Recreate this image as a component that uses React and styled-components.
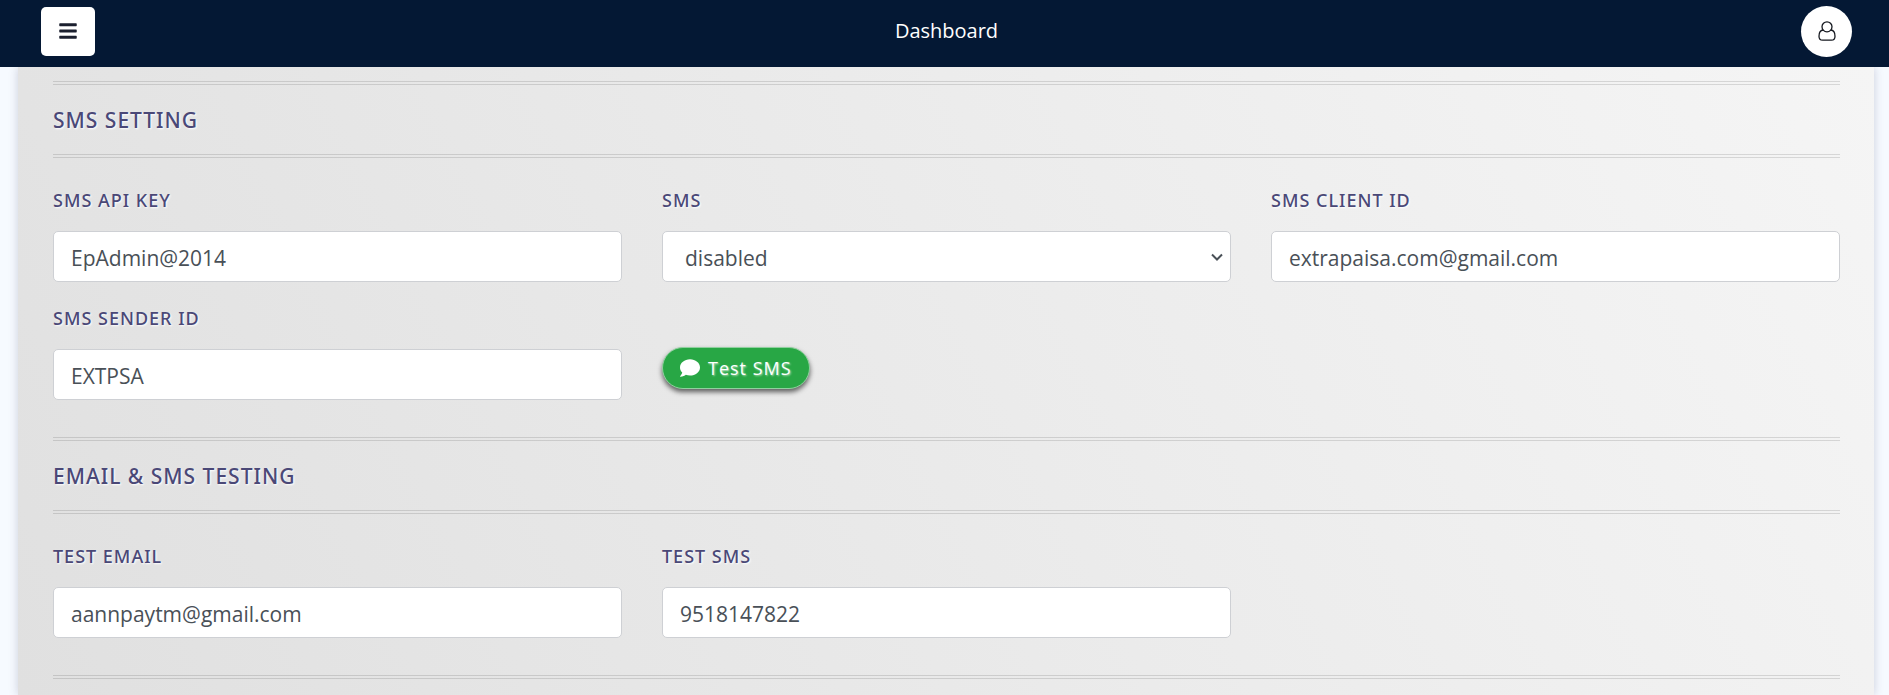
import styled, { createGlobalStyle } from "styled-components";
import { FaBars, FaComment } from "react-icons/fa";

const App = () => {
    return (
        <>
            <GlobalStyle />
            <Page>
                <Header>
                    <MenuButton type="button" aria-label="Menu">
                        <FaBars size={20} />
                    </MenuButton>
                    <Title>Dashboard</Title>
                    <UserButton type="button" aria-label="Account">
                        <UserIcon />
                    </UserButton>
                </Header>
                <Panel>
                    <Section title="SMS Setting">
                        <Field id="sms-key" label="SMS Api Key" value="EpAdmin@2014" />
                        <FormGroup>
                            <Label htmlFor="sms-status">SMS</Label>
                            <SelectWrap>
                                <Select id="sms-status" defaultValue="disabled">
                                    <option value="enabled">enabled</option>
                                    <option value="disabled">disabled</option>
                                </Select>
                                <Chevron viewBox="0 0 12 8">
                                    <path d="M1 1.5l5 5 5-5" />
                                </Chevron>
                            </SelectWrap>
                        </FormGroup>
                        <Field
                            id="sms-client"
                            label="SMS Client ID"
                            value="extrapaisa.com@gmail.com"
                        />
                        <Field id="sms-sender" label="SMS Sender ID" value="EXTPSA" />
                        <TestButton type="button">
                            <FaComment size={20} />
                            Test SMS
                        </TestButton>
                    </Section>
                    <Section title="Email & SMS Testing">
                        <Field
                            id="test-email"
                            label="Test Email"
                            value="aannpaytm@gmail.com"
                        />
                        <Field id="test-sms" label="Test SMS" value="9518147822" />
                    </Section>
                    <Divider />
                </Panel>
            </Page>
        </>
    );
};

export default App;

const Section = ({ title, children }) => (
    <section>
        <Divider />
        <Heading>{title}</Heading>
        <Divider />
        <Fields>{children}</Fields>
    </section>
);

const Field = ({ id, label, value }) => (
    <FormGroup>
        <Label htmlFor={id}>{label}</Label>
        <Input id={id} type="text" defaultValue={value} />
    </FormGroup>
);

const UserIcon = () => (
    <svg
        width="18"
        height="20"
        viewBox="0 0 18 20"
        fill="none"
        stroke="currentColor"
        strokeWidth="1.3"
    >
        <circle cx="9" cy="5.8" r="5" />
        <path d="M5.2 9C2.4 9.3 1 11.9 1 15.2c0 2.4 1.5 4 3.6 4h8.8c2.1 0 3.6-1.6 3.6-4 0-3.3-1.4-5.900-4.200-6.200" />
    </svg>
);

const GlobalStyle = createGlobalStyle`
    * {
        box-sizing: border-box;
    }

    body {
        margin: 0;
        background-color: #f6faff;
        font-family: "Open Sans", "Noto Sans", sans-serif;
    }

    button,
    input,
    select {
        font-family: inherit;
    }
`;

const Page = styled.div`
    min-height: 100vh;
    display: flex;
    flex-direction: column;
`;

const Header = styled.header`
    position: sticky;
    top: 0;
    z-index: 2;
    display: grid;
    grid-template-columns: 1fr auto 1fr;
    align-items: center;
    padding: 5px 37px 10px 41px;
    background-color: #041834;
`;

const MenuButton = styled.button`
    display: flex;
    align-items: center;
    justify-content: center;
    width: 54px;
    height: 49px;
    padding: 0;
    border: 0;
    border-radius: 5px;
    background-color: #fff;
    color: #1b1f2e;
    cursor: pointer;
`;

const Title = styled.h1`
    margin: 0;
    color: #fff;
    font-size: 20px;
    font-weight: 400;
    line-height: 52px;
`;

const UserButton = styled.button`
    display: flex;
    align-items: center;
    justify-content: center;
    justify-self: end;
    width: 51px;
    height: 51px;
    padding: 0;
    border: 0;
    border-radius: 50%;
    background-color: #fff;
    color: #15181f;
    cursor: pointer;
`;

const Panel = styled.main`
    flex: 1;
    margin: 0 15px 0 18px;
    padding: 14px 34px 16px 35px;
    background-image: linear-gradient(63deg, #e0e0e0, #f5f5f5);
    box-shadow: 0 0 9px rgba(60, 50, 90, 0.22);
`;

const Divider = styled.hr`
    margin: 0;
    border: 0;
    border-top: 4px double rgba(0, 0, 0, 0.12);
`;

const Heading = styled.h2`
    margin: 0;
    padding-top: 1px;
    color: #4a4877;
    font-family: "Noto Sans", sans-serif;
    font-size: 21px;
    font-weight: 500;
    letter-spacing: 1px;
    line-height: 68px;
    text-transform: uppercase;
    text-shadow: 1px 1px 2px #fff;
`;

const Fields = styled.div`
    display: grid;
    grid-template-columns: repeat(3, 1fr);
    gap: 18px 40px;
    padding: 24px 0 37px;
`;

const FormGroup = styled.div`
    display: flex;
    flex-direction: column;
    gap: 13px;
    min-width: 0;
`;

const Label = styled.label`
    color: #4a4877;
    font-family: "Noto Sans", sans-serif;
    font-size: 18px;
    font-weight: 500;
    letter-spacing: 1px;
    line-height: 36px;
    text-transform: uppercase;
    text-shadow: 1px 1px 2px #fff;
`;

const Input = styled.input`
    width: 100%;
    height: 51px;
    padding: 2px 17px 0;
    border: 1px solid #ced0d4;
    border-radius: 5px;
    background-color: #fff;
    color: #495057;
    font-size: 21px;
`;

const SelectWrap = styled.div`
    position: relative;
`;

const Select = styled(Input).attrs({ as: "select" })`
    display: block;
    padding: 2px 40px 0 22px;
    appearance: none;
`;

const Chevron = styled.svg`
    position: absolute;
    top: 22px;
    right: 8px;
    width: 12px;
    height: 8px;
    fill: none;
    stroke: #495057;
    stroke-width: 2;
    pointer-events: none;
`;

const TestButton = styled.button`
    display: flex;
    align-items: center;
    justify-content: center;
    gap: 8px;
    align-self: start;
    justify-self: start;
    height: 42px;
    margin-top: 47px;
    padding: 0 17px;
    border: 1px solid #8fd19e;
    border-radius: 21px;
    background-color: #28a745;
    box-shadow: 0 3px 5px rgba(0, 0, 0, 0.6);
    color: #fff;
    font-size: 18px;
    letter-spacing: 1px;
    text-shadow: 1px 1px 2px rgba(255, 255, 255, 0.6);
    cursor: pointer;
`;
